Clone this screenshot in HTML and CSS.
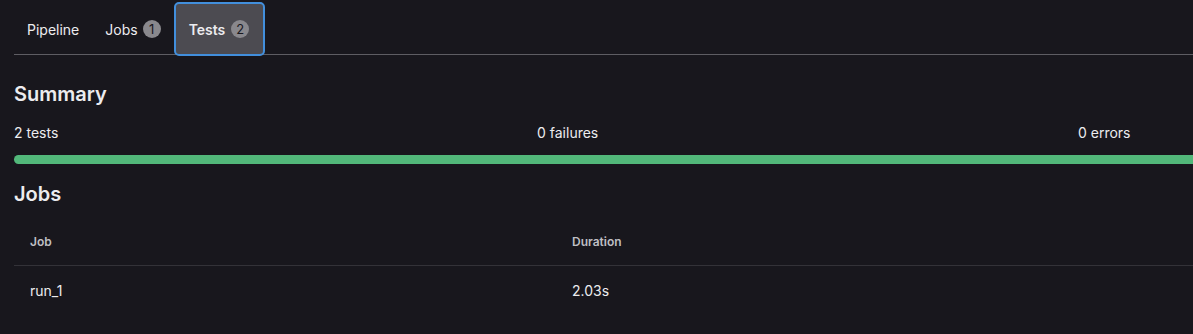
FILE: index.html
```html
<!DOCTYPE html>
<html lang="en">
<head>
    <meta charset="UTF-8">
    <title>Pipeline tests</title>
    <link rel="stylesheet" href="styles.css">
</head>
<body>
    <div class="page">
        <ul class="tabs">
            <li class="tab">Pipeline</li>
            <li class="tab">Jobs <span class="badge">1</span></li>
            <li class="tab active">Tests <span class="badge">2</span></li>
        </ul>

        <h2 class="heading summary-heading">Summary</h2>
        <div class="summary">
            <div class="stat stat-tests">2 tests</div>
            <div class="stat stat-failures">0 failures</div>
            <div class="stat stat-errors">0 errors</div>
        </div>
        <div class="progress"><div class="progress-bar"></div></div>

        <h2 class="heading">Jobs</h2>
        <table class="jobs">
            <thead>
                <tr>
                    <th class="col-job">Job</th>
                    <th>Duration</th>
                </tr>
            </thead>
            <tbody>
                <tr>
                    <td>run_1</td>
                    <td>2.03s</td>
                </tr>
            </tbody>
        </table>
    </div>
</body>
</html>
```

FILE: styles.css
```css
body {
    margin: 0;
    background-color: #18171d;
    color: #ececef;
    font-family: Inter, "Noto Sans", sans-serif;
    font-size: 14px;
    overflow: hidden;
}
.page {
    padding: 0 0 0 14px;
    width: 1400px;
}
.tabs {
    list-style: none;
    margin: 0;
    padding: 2px 0 0;
    display: flex;
    border-bottom: 1px solid #5e5d63;
}
.tab {
    display: flex;
    align-items: center;
    gap: 5px;
    height: 50px;
    padding: 0 11px;
    border: 2px solid transparent;
    border-radius: 4px 4px 0 0;
    margin-bottom: -2px;
    color: #ececef;
}
.tab.active {
    padding: 0 14px 0 13px;
    gap: 6px;
    background-color: #4c4b51;
    border-color: #428fdc;
    border-radius: 5px;
    font-weight: 600;
}
.badge {
    display: inline-flex;
    align-items: center;
    justify-content: center;
    width: 18px;
    height: 18px;
    border-radius: 50%;
    background-color: #89888d;
    color: #18171d;
    font-size: 13px;
    font-weight: 400;
}
.heading {
    margin: 0;
    font-size: 20px;
    font-weight: 600;
    line-height: 24px;
}
.summary-heading {
    margin-top: 27px;
}
.summary {
    display: flex;
    margin-top: 17px;
    line-height: 20px;
}
.stat-tests {
    width: 523px;
}
.stat-failures {
    width: 541px;
}
.progress {
    margin-top: 12px;
    height: 9px;
    border-radius: 5px 0 0 5px;
    background-color: #52b87a;
    overflow: hidden;
}
.progress-bar {
    height: 100%;
    width: 100%;
}
.progress + .heading {
    margin-top: 18px;
}
.jobs {
    width: 100%;
    border-collapse: collapse;
    margin-top: 14px;
}
.jobs th {
    text-align: left;
    font-size: 12px;
    font-weight: 600;
    color: #bfbfc3;
    padding: 14px 16px 16px;
    border-bottom: 1px solid #333238;
}
.jobs th.col-job {
    width: 510px;
}
.jobs td {
    padding: 16px 16px;
    color: #ececef;
}
```
